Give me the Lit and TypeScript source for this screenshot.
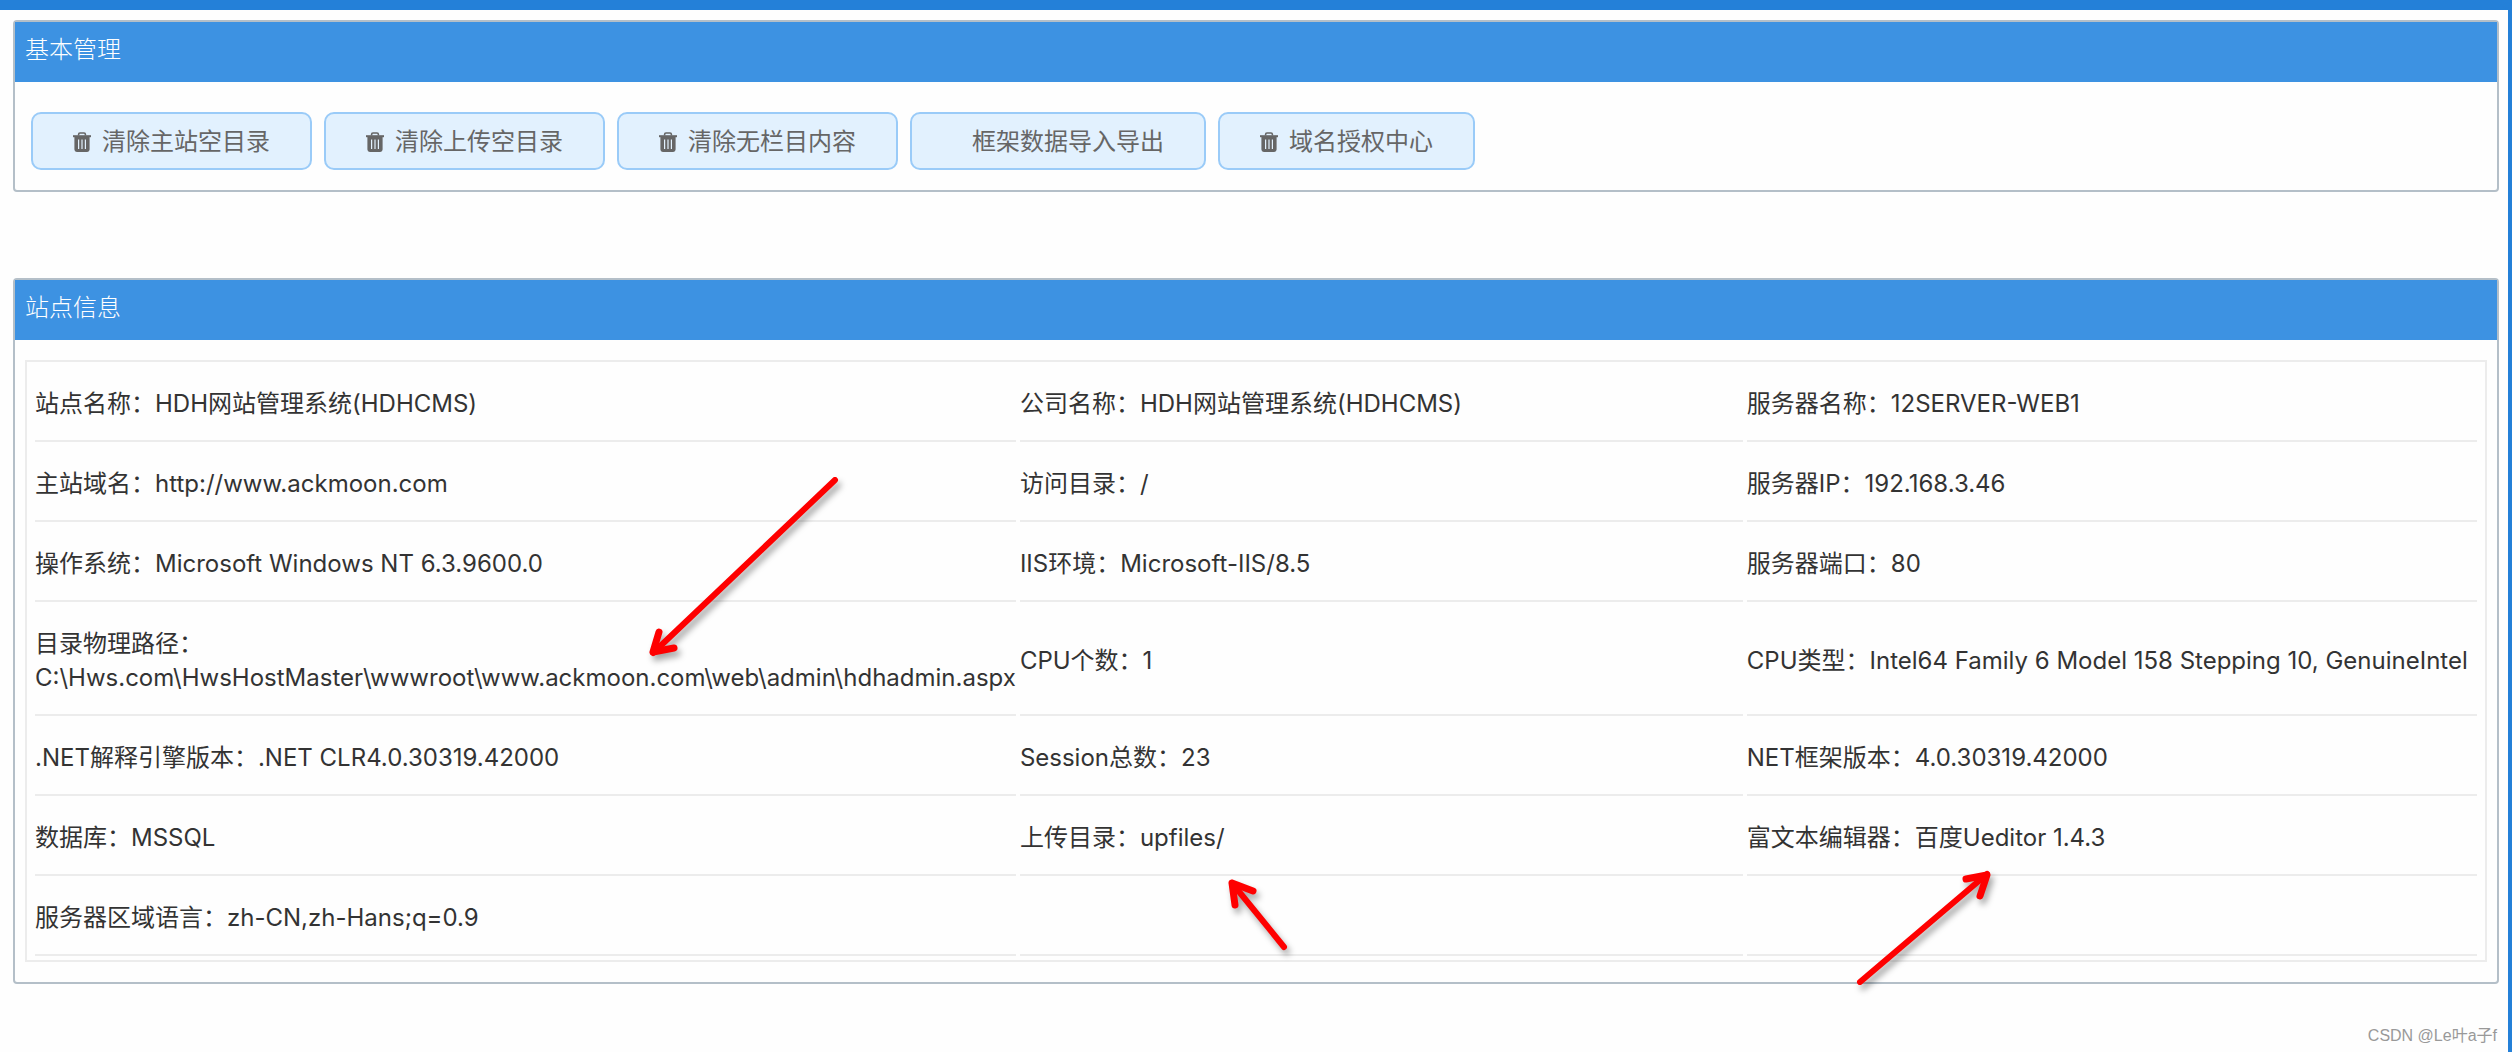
import { LitElement, html, css, nothing } from "lit";
import { customElement } from "lit/decorators.js";

interface Action {
  text: string;
  trash: boolean;
}

type Entry = [label: string, value: string] | null;

const ACTIONS: Action[] = [
  { text: "清除主站空目录", trash: true },
  { text: "清除上传空目录", trash: true },
  { text: "清除无栏目内容", trash: true },
  { text: "框架数据导入导出", trash: false },
  { text: "域名授权中心", trash: true },
];

const ROWS: Entry[][] = [
  [["站点名称：", "HDH网站管理系统(HDHCMS)"], ["公司名称：", "HDH网站管理系统(HDHCMS)"], ["服务器名称：", "12SERVER-WEB1"]],
  [["主站域名：", "http://www.ackmoon.com"], ["访问目录：", "/"], ["服务器IP：", "192.168.3.46"]],
  [["操作系统：", "Microsoft Windows NT 6.3.9600.0"], ["IIS环境：", "Microsoft-IIS/8.5"], ["服务器端口：", "80"]],
  [
    ["目录物理路径：", " C:\\Hws.com\\HwsHostMaster\\wwwroot\\www.ackmoon.com\\web\\admin\\hdhadmin.aspx"],
    ["CPU个数：", "1"],
    ["CPU类型：", "Intel64 Family 6 Model 158 Stepping 10, GenuineIntel"],
  ],
  [[".NET解释引擎版本：", ".NET CLR4.0.30319.42000"], ["Session总数：", "23"], ["NET框架版本：", "4.0.30319.42000"]],
  [["数据库：", "MSSQL"], ["上传目录：", "upfiles/"], ["富文本编辑器：", "百度Ueditor 1.4.3"]],
  [["服务器区域语言：", "zh-CN,zh-Hans;q=0.9"], null, null],
];

@customElement("app-root")
export class AppRoot extends LitElement {
  static styles = css`
    :host {
      display: block;
      font-family: Inter, "Noto Sans CJK SC", sans-serif;
      font-size: 24px;
      line-height: 34px;
      color: #333;
    }
    * {
      box-sizing: border-box;
    }
    .page {
      position: relative;
      display: flex;
      flex-direction: column;
      min-height: 100vh;
      padding: 10px 9px 0 13px;
      border-top: 10px solid #2480d8;
      border-right: 4px solid #2480d8;
      background: #fefefe;
      overflow: hidden;
    }
    .panel {
      border: 2px solid #b4bfc8;
      border-radius: 4px;
    }
    .panel + .panel {
      margin-top: 86px;
    }
    .title {
      margin: 0;
      padding: 9px 10px 17px;
      background: #3d92e2;
      color: #fff;
      font-family: "Noto Sans CJK SC", sans-serif;
      font-size: 24px;
      font-weight: 300;
    }
    .actions {
      display: flex;
      flex-wrap: wrap;
      gap: 12px;
      padding: 30px 16px 20px;
    }
    .action {
      display: flex;
      align-items: center;
      gap: 11px;
      height: 58px;
      padding: 2px 40px 0;
      border: 2px solid #9acbf8;
      border-radius: 10px;
      background: #e2f1fe;
      color: #666;
      font: inherit;
      white-space: nowrap;
      cursor: pointer;
    }
    .plain {
      padding-left: 60px;
    }
    .icon {
      width: 18px;
      height: 20px;
      flex: none;
    }
    .info {
      margin: 20px 10px;
      padding: 0 4px;
      border: 2px solid #ececec;
    }
    .table {
      width: 100%;
      table-layout: fixed;
      border-collapse: separate;
      border-spacing: 4px;
    }
    .wide {
      width: 40.3%;
    }
    .mid {
      width: 29.7%;
    }
    .cell {
      height: 76px;
      padding: 21px 0 19px;
      border-bottom: 2px solid #ececec;
      vertical-align: middle;
      text-align: left;
    }
    .marks {
      position: absolute;
      left: 0;
      top: -10px;
      width: 2508px;
      height: 1052px;
      pointer-events: none;
      filter: drop-shadow(3px 5px 3px rgba(0, 0, 0, 0.35));
    }
    .credit {
      margin: auto 0 0;
      padding: 0 2px 4px 0;
      color: #999;
      font-family: "Liberation Sans", "Noto Sans CJK SC", sans-serif;
      font-size: 16px;
      line-height: 24px;
      text-align: right;
    }
  `;

  private trash() {
    return html`<svg class="icon" viewBox="0 0 18 20" aria-hidden="true">
      <path d="M5.6 3.6V2.4Q5.6 1 7 1H11Q12.4 1 12.4 2.4V3.6" fill="none" stroke="#666" stroke-width="1.6" />
      <path d="M0 3.2H18V5.2H0Z" fill="#666" />
      <path
        fill="#666"
        fill-rule="evenodd"
        d="M1.4 5H16.6V17.6Q16.6 20 14.2 20H3.8Q1.4 20 1.4 17.6ZM5 7.4V17H6.2V7.4ZM8.4 7.4V17H9.6V7.4ZM11.8 7.4V17H13V7.4Z"
      />
    </svg>`;
  }

  render() {
    return html`
      <main class="page">
        <section class="panel">
          <h2 class="title">基本管理</h2>
          <div class="actions">
            ${ACTIONS.map(
              (a) => html`<button type="button" class="action ${a.trash ? "" : "plain"}">
                ${a.trash ? this.trash() : nothing}<span>${a.text}</span>
              </button>`
            )}
          </div>
        </section>
        <section class="panel">
          <h2 class="title">站点信息</h2>
          <div class="info">
            <table class="table">
              <colgroup>
                <col class="wide" />
                <col class="mid" />
                <col />
              </colgroup>
              <tbody>
                ${ROWS.map(
                  (row) => html`<tr>
                    ${row.map((e) => html`<td class="cell">${e ? html`${e[0]}${e[1]}` : nothing}</td>`)}
                  </tr>`
                )}
              </tbody>
            </table>
          </div>
        </section>
        <p class="credit">CSDN @Le叶a子f</p>
        <svg class="marks" viewBox="0 0 2508 1052" fill="none" stroke="#fe0000" stroke-width="6" stroke-linecap="round" stroke-linejoin="round" aria-hidden="true">
          <path d="M835 480L653 653" />
          <path d="M1284 947L1232 883" />
          <path d="M1860 982L1987 874" />
          <g stroke-width="7">
            <path d="M659 632L653 652L674 648" />
            <path d="M1235 905L1232 883L1253 891" />
            <path d="M1966 879L1987 875L1980 896" />
          </g>
        </svg>
      </main>
    `;
  }
}
